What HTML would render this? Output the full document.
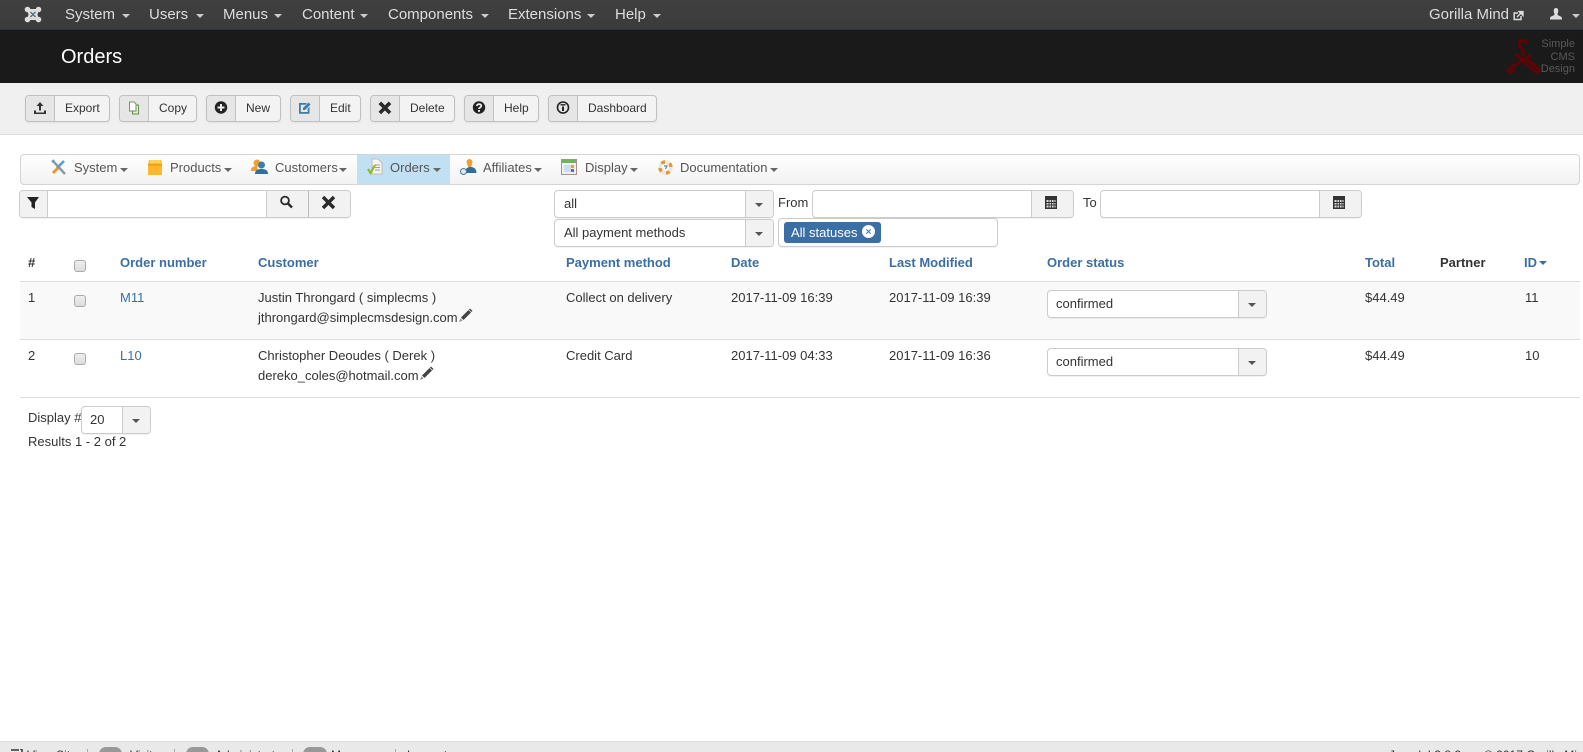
<!DOCTYPE html>
<html><head><meta charset="utf-8"><title>Orders</title>
<style>
*{box-sizing:border-box}
html,body{margin:0;padding:0;width:1583px;height:752px;overflow:hidden;background:#fff;font-family:"Liberation Sans",Arial,sans-serif;font-size:13px;color:#333}
#w{position:relative;width:1583px;height:752px;overflow:hidden}
.a,.t{position:absolute}
.t{white-space:nowrap;line-height:20px}
.nav{left:0;top:0;width:1583px;height:30px;background:linear-gradient(#404040,#3b3b3b);border-bottom:1px solid #2b3440}
.n{color:#ddd;font-size:15px;top:5px}
.c{position:absolute;width:0;height:0;border-left:4px solid transparent;border-right:4px solid transparent;border-top:4px solid #666}
.c.w{border-top:4px solid #ccc}
.head{left:0;top:30px;width:1583px;height:53px;background:#1a1a1a}
.tb{left:0;top:83px;width:1583px;height:52px;background:#f0f0f0;border-bottom:1px solid #ddd}
.btn{position:absolute;top:95px;height:27px;border:1px solid #c0c0c0;border-radius:4px;background:#f3f3f3;box-shadow:0 1px 2px rgba(0,0,0,.06);font-size:12px;line-height:25px;color:#333}
.btn i{position:absolute;left:0;top:0;bottom:0;width:29px;background:#e6e6e6;border-right:1px solid #c0c0c0;border-radius:3px 0 0 3px}
.btn svg{position:absolute;left:6px;top:4px}
.btn span{position:absolute;left:39px;top:0;white-space:nowrap}
.sub{left:20px;top:154px;width:1560px;height:31px;border:1px solid #d4d4d4;border-radius:4px;background:linear-gradient(#fff,#f2f2f2)}
.m{font-size:13px;top:158px;color:#555}
.box{position:absolute;height:28px;border:1px solid #ccc;background:#fff;border-radius:4px;box-shadow:0 1px 1px rgba(0,0,0,.06)}
.sel i{position:absolute;right:0;top:0;bottom:0;background:#f2f2f2;border-left:1px solid #ccc;border-radius:0 3px 3px 0}
.sel b{position:absolute;left:8px;top:3px;font-weight:normal;line-height:20px;white-space:nowrap}
.sel .c{top:12px;border-top-color:#555}
.th{font-weight:bold;color:#3a6ea5;top:253px}
.l{color:#3a6ea5}
.hr{left:20px;width:1560px;height:1px;background:#ddd}
.cb{position:absolute;left:74px;width:12px;height:12px;border:1px solid #aaa;border-radius:3px;background:linear-gradient(#eee,#ddd)}
.foot{left:0;top:741px;width:1583px;height:11px;background:#e9e9e9;border-top:1px solid #ddd}
.f{top:745px;font-size:12px;color:#333}
.sp{top:749px;width:1px;height:3px;background:#aaa}
.bd{top:747px;height:14px;background:#999;border-radius:8px}
</style></head><body><div id="w">

<div class="a nav"></div>
<svg class="a" style="left:24px;top:6px" width="18" height="17" viewBox="0 0 18 17"><g fill="#ddd"><circle cx="3.500" cy="3.500" r="2.800"/><circle cx="14.500" cy="3.500" r="2.800"/><circle cx="3.500" cy="13.500" r="2.800"/><circle cx="14.500" cy="13.500" r="2.800"/><path d="M3 3H15L13.500 8.500L15 14H3L4.500 8.500Z"/></g><path d="M6.500 6L9 8.500L11.500 6M6.500 11L9 8.500L11.500 11" fill="none" stroke="#5a6a80" stroke-width="1.300"/></svg>
<div class="t n" style="left:65px">System</div><div class="c w" style="left:122px;top:14px"></div>
<div class="t n" style="left:149px">Users</div><div class="c w" style="left:196px;top:14px"></div>
<div class="t n" style="left:223px">Menus</div><div class="c w" style="left:274px;top:14px"></div>
<div class="t n" style="left:302px">Content</div><div class="c w" style="left:360px;top:14px"></div>
<div class="t n" style="left:388px">Components</div><div class="c w" style="left:481px;top:14px"></div>
<div class="t n" style="left:508px">Extensions</div><div class="c w" style="left:587px;top:14px"></div>
<div class="t n" style="left:615px">Help</div><div class="c w" style="left:653px;top:14px"></div>
<div class="t n" style="left:1429px">Gorilla Mind</div>
<svg class="a" style="left:1513px;top:10px" width="11" height="11" viewBox="0 0 11 11"><path d="M8 6V9.500H1.200V3H5" fill="none" stroke="#ddd" stroke-width="1.500"/><path d="M4 7L8 3M6 1.500H10V5.500Z" stroke="#ddd" stroke-width="1.300" fill="#ddd"/></svg>
<svg class="a" style="left:1550px;top:8px" width="12" height="12" viewBox="0 0 12 12"><path d="M6 0C4.200 0 3.500 1.500 3.800 3.500C4 5 4.500 5.500 4.500 6.500C4 8 0 8.200 0 10V11.500H12V10C12 8.200 8 8 7.500 6.500C7.500 5.500 8 5 8.200 3.500C8.500 1.500 7.800 0 6 0Z" fill="#ddd"/></svg>
<div class="c w" style="left:1572px;top:14px"></div>

<div class="a head"></div>
<div class="t" style="left:61px;top:47px;font-size:20px;color:#fff">Orders</div>
<svg class="a" style="left:1505px;top:38px" width="36" height="36" viewBox="0 0 36 36"><g fill="none" stroke="#5c0505" stroke-width="3.200" stroke-linecap="round"><path d="M21.500 4.500C20 1.500 14 2 14 5.500C14 8.500 18 10 18 14V17"/><path d="M25 18L5 30C2.500 32 3.500 35 6 34L9 32"/><path d="M11.500 17L31 34C33.500 35 35 33 33.500 31L21 20"/></g></svg>
<div class="a" style="left:1535px;top:38px;width:40px;text-align:right;font-size:11px;line-height:12.500px;color:#595959">Simple<br>CMS<br>Design</div>

<div class="a tb"></div>
<div class="btn" style="left:25px;width:85px"><i></i><svg width="16" height="16" viewBox="0 0 16 16"><path d="M8 2L11.500 6H9V10.500H7V6H4.500ZM2 10.500H4V12.500H12V10.500H14V14H2Z" fill="#333"/></svg><span>Export</span></div>
<div class="btn" style="left:119px;width:78px"><i></i><svg width="16" height="16" viewBox="0 0 16 16"><path d="M3.500 2H8L10 4V11H3.500Z" fill="#fff" stroke="#6a9a5a"/><path d="M10 5H12.500V14H6.500V11" fill="none" stroke="#6a8f4a"/></svg><span>Copy</span></div>
<div class="btn" style="left:206px;width:75px"><i></i><svg width="16" height="16" viewBox="0 0 16 16"><circle cx="8" cy="7.500" r="6.200" fill="#222"/><path d="M8 4V11M4.500 7.500H11.500" stroke="#eee" stroke-width="2"/></svg><span>New</span></div>
<div class="btn" style="left:290px;width:71px"><i></i><svg width="16" height="16" viewBox="0 0 16 16"><path d="M2 3H10L8.500 4.800H3.800V12H10.700V8.500L12.500 6.700V13.800H2Z" fill="#3f7ba6"/><path d="M6 8L11.500 2.500L13.500 4.500L8 10H6Z" fill="#3f7ba6"/></svg><span>Edit</span></div>
<div class="btn" style="left:370px;width:85px"><i></i><svg width="16" height="16" viewBox="0 0 16 16"><path d="M2.800 2.800L13 13M13 2.800L2.800 13" stroke="#2a2a2a" stroke-width="3.600"/></svg><span>Delete</span></div>
<div class="btn" style="left:464px;width:75px"><i></i><svg width="16" height="16" viewBox="0 0 16 16"><circle cx="8" cy="7.500" r="6.200" fill="#222"/><path d="M5.800 6C6 3.500 10.300 3.500 10.300 6C10.300 7.500 8 7.500 8 9" fill="none" stroke="#eee" stroke-width="1.700"/><rect x="7" y="10" width="2" height="1.800" fill="#eee"/></svg><span>Help</span></div>
<div class="btn" style="left:548px;width:109px"><i></i><svg width="16" height="16" viewBox="0 0 16 16"><circle cx="8" cy="7.500" r="5.500" fill="none" stroke="#222" stroke-width="1.600"/><path d="M8 6.500V11" stroke="#222" stroke-width="2"/><path d="M5.500 4.800H10.500" stroke="#222" stroke-width="1.400"/></svg><span>Dashboard</span></div>

<div class="a sub"></div>
<div class="a" style="left:357px;top:155px;width:93px;height:29px;background:#c1e0f3"></div>
<svg class="a" style="left:50px;top:159px" width="18" height="18" viewBox="0 0 18 18"><path d="M3 2L15 15" stroke="#8a9aa5" stroke-width="2.400"/><path d="M14 2L7 9" stroke="#5b9ec4" stroke-width="2.600"/><path d="M8 9L3 14" stroke="#e8992e" stroke-width="3"/><path d="M2 3L4 1" stroke="#5b9ec4" stroke-width="2"/></svg>
<div class="t m" style="left:74px">System</div><div class="c" style="left:120px;top:168px"></div>
<svg class="a" style="left:147px;top:159px" width="16" height="17" viewBox="0 0 16 17"><path d="M2 1H14L15 5V16H1V5Z" fill="#fdb92e"/><path d="M1 5H15V7H1Z" fill="#f5a512"/><path d="M3 1H13L13.500 4H2.500Z" fill="#fcd262"/></svg>
<div class="t m" style="left:170px">Products</div><div class="c" style="left:224px;top:168px"></div>
<svg class="a" style="left:251px;top:158px" width="17" height="18" viewBox="0 0 17 18"><circle cx="6" cy="5" r="3.500" fill="#f0a030"/><path d="M0 12C0 9 3 8 6 8L7 13H0Z" fill="#f0a030"/><circle cx="10.500" cy="7" r="3.500" fill="#3d7da8"/><path d="M4 16C4 12 7 11 10.500 11C14 11 17 12 17 16Z" fill="#2f6f9c"/></svg>
<div class="t m" style="left:275px">Customers</div><div class="c" style="left:339px;top:168px"></div>
<svg class="a" style="left:367px;top:158px" width="16" height="18" viewBox="0 0 16 18"><path d="M5 1H11L15 5V16H5Z" fill="#f5f5ee" stroke="#b5b5a8" stroke-width=".8"/><path d="M8 7H13M8 9.500H13M8 12H13" stroke="#a0a098"/><path d="M1 11L3.500 15L8 7" fill="none" stroke="#8dbb2c" stroke-width="2.200"/></svg>
<div class="t m" style="left:390px">Orders</div><div class="c" style="left:433px;top:168px"></div>
<svg class="a" style="left:460px;top:158px" width="17" height="18" viewBox="0 0 17 18"><circle cx="9.500" cy="4" r="3" fill="#f0a030"/><path d="M7 6H12L11 9H8Z" fill="#f0a030"/><path d="M5 15C5 10 8 9 10.500 9C13 9 16.500 10 16.500 15Z" fill="#2f6f9c"/><circle cx="3.500" cy="13.500" r="3" fill="#dfe8ee" stroke="#4a7a9a"/></svg>
<div class="t m" style="left:483px">Affiliates</div><div class="c" style="left:534px;top:168px"></div>
<svg class="a" style="left:561px;top:159px" width="16" height="16" viewBox="0 0 16 16"><rect x=".5" y=".5" width="15" height="15" fill="#efeff0" stroke="#b08c8c"/><rect x="1" y="1" width="14" height="3" fill="#72b25a"/><rect x="3" y="6" width="7" height="7" fill="#cfdcec"/><rect x="10" y="6" width="3" height="3" fill="#e6a03a"/><rect x="10" y="10" width="3" height="3" fill="#3f77c0"/></svg>
<div class="t m" style="left:585px">Display</div><div class="c" style="left:630px;top:168px"></div>
<svg class="a" style="left:658px;top:160px" width="15" height="15" viewBox="0 0 15 15"><circle cx="7.500" cy="7.500" r="5.500" fill="none" stroke="#e8e8e8" stroke-width="3.400"/><path d="M3.500 3.500A5.500 5.500 0 0 1 7 2M11.500 3.500A5.500 5.500 0 0 1 13 7M11.500 11.500A5.500 5.500 0 0 1 8 13M3.500 11.500A5.500 5.500 0 0 1 2 8" fill="none" stroke="#e39a2d" stroke-width="3.400"/><path d="M6 6H9L7.500 9" fill="none" stroke="#5b86b5" stroke-width="1.200"/></svg>
<div class="t m" style="left:680px">Documentation</div><div class="c" style="left:770px;top:168px"></div>

<div class="box" style="left:19px;top:190px;width:332px;overflow:hidden"></div>
<div class="a" style="left:20px;top:191px;width:28px;height:26px;background:#f2f2f2;border-right:1px solid #ccc;border-radius:3px 0 0 3px"></div>
<svg class="a" style="left:25px;top:196px" width="16" height="14" viewBox="0 0 16 14"><path d="M2 1H14L10 6.500V13L6.500 11V6.500Z" fill="#222"/></svg>
<div class="a" style="left:266px;top:191px;width:84px;height:26px;background:#f2f2f2;border-left:1px solid #ccc;border-radius:0 3px 3px 0"></div>
<div class="a" style="left:308px;top:191px;width:1px;height:26px;background:#bbb"></div>
<svg class="a" style="left:279px;top:195px" width="15" height="15" viewBox="0 0 15 15"><circle cx="6" cy="5.500" r="3.900" fill="none" stroke="#2a2a2a" stroke-width="1.800"/><path d="M9 8.500L13 12.500" stroke="#2a2a2a" stroke-width="2.400"/></svg>
<svg class="a" style="left:321px;top:195px" width="15" height="15" viewBox="0 0 15 15"><path d="M2 2L13 13M13 2L2 13" stroke="#2a2a2a" stroke-width="3.400"/></svg>

<div class="box sel" style="left:554px;top:190px;width:220px"><b style="left:9px">all</b><i style="width:28px"></i><div class="c" style="left:200px"></div></div>
<div class="box sel" style="left:554px;top:219px;width:220px"><b style="left:9px">All payment methods</b><i style="width:28px"></i><div class="c" style="left:200px"></div></div>
<div class="t" style="left:778px;top:193px">From</div>
<div class="box sel" style="left:812px;top:190px;width:262px"><i style="width:42px"></i></div>
<svg class="a" style="left:1044px;top:195px" width="14" height="15" viewBox="0 0 14 15"><rect x="1" y="1" width="12" height="13" fill="#333"/><path d="M2.500 5H11.500V12.500H2.500Z" fill="#ddd"/><path d="M2.500 7.500H11.500M2.500 10H11.500M5 5V12.500M7.500 5V12.500M10 5V12.500" stroke="#333" stroke-width=".9"/></svg>
<div class="t" style="left:1083px;top:193px">To</div>
<div class="box sel" style="left:1100px;top:190px;width:262px"><i style="width:42px"></i></div>
<svg class="a" style="left:1332px;top:195px" width="14" height="15" viewBox="0 0 14 15"><rect x="1" y="1" width="12" height="13" fill="#333"/><path d="M2.500 5H11.500V12.500H2.500Z" fill="#ddd"/><path d="M2.500 7.500H11.500M2.500 10H11.500M5 5V12.500M7.500 5V12.500M10 5V12.500" stroke="#333" stroke-width=".9"/></svg>
<div class="box" style="left:778px;top:218px;width:220px;height:29px"></div>
<div class="a" style="left:784px;top:222px;width:97px;height:21px;background:#3a6ea5;border-radius:3px"></div>
<div class="t" style="left:791px;top:223px;color:#fff">All statuses</div>
<svg class="a" style="left:861px;top:224px" width="15" height="15" viewBox="0 0 15 15"><circle cx="7.500" cy="7.500" r="6.500" fill="#fff"/><path d="M5.300 5.300L9.700 9.700M9.700 5.300L5.300 9.700" stroke="#3a6ea5" stroke-width="1"/></svg>

<div class="t" style="left:28px;top:253px;font-weight:bold">#</div>
<div class="cb" style="top:260px"></div>
<div class="t th" style="left:120px">Order number</div>
<div class="t th" style="left:258px">Customer</div>
<div class="t th" style="left:566px">Payment method</div>
<div class="t th" style="left:731px">Date</div>
<div class="t th" style="left:889px">Last Modified</div>
<div class="t th" style="left:1047px">Order status</div>
<div class="t th" style="left:1365px">Total</div>
<div class="t" style="left:1440px;top:253px;font-weight:bold">Partner</div>
<div class="t th" style="left:1524px">ID</div>
<div class="c" style="left:1539px;top:261px;border-top-color:#3a6ea5"></div>

<div class="a hr" style="top:281px"></div>
<div class="a" style="left:20px;top:282px;width:1560px;height:57px;background:#f9f9f9"></div>
<div class="a hr" style="top:339px"></div>
<div class="a hr" style="top:397px"></div>

<div class="t" style="left:28px;top:288px">1</div>
<div class="cb" style="top:295px"></div>
<div class="t l" style="left:120px;top:288px">M11</div>
<div class="t" style="left:258px;top:288px">Justin Throngard ( simplecms )</div>
<div class="t" style="left:258px;top:308px">jthrongard@simplecmsdesign.com</div>
<svg class="a" style="left:458px;top:308px" width="15" height="15" viewBox="0 0 15 15"><path d="M3 9.500L10.500 2L13 4.500L5.500 12Z" fill="#444"/><path d="M11.500 1L14 3.500" stroke="#444" stroke-width="1.500"/><path d="M1 14L2.500 10.500L4.500 12.500Z" fill="#888"/></svg>
<div class="t" style="left:566px;top:288px">Collect on delivery</div>
<div class="t" style="left:731px;top:288px">2017-11-09 16:39</div>
<div class="t" style="left:889px;top:288px">2017-11-09 16:39</div>
<div class="box sel" style="left:1047px;top:290px;width:220px"><b>confirmed</b><i style="width:28px"></i><div class="c" style="left:200px"></div></div>
<div class="t" style="left:1365px;top:288px">$44.49</div>
<div class="t" style="left:1525px;top:288px">11</div>

<div class="t" style="left:28px;top:346px">2</div>
<div class="cb" style="top:353px"></div>
<div class="t l" style="left:120px;top:346px">L10</div>
<div class="t" style="left:258px;top:346px">Christopher Deoudes ( Derek )</div>
<div class="t" style="left:258px;top:366px">dereko_coles@hotmail.com</div>
<svg class="a" style="left:419px;top:366px" width="15" height="15" viewBox="0 0 15 15"><path d="M3 9.500L10.500 2L13 4.500L5.500 12Z" fill="#444"/><path d="M11.500 1L14 3.500" stroke="#444" stroke-width="1.500"/><path d="M1 14L2.500 10.500L4.500 12.500Z" fill="#888"/></svg>
<div class="t" style="left:566px;top:346px">Credit Card</div>
<div class="t" style="left:731px;top:346px">2017-11-09 04:33</div>
<div class="t" style="left:889px;top:346px">2017-11-09 16:36</div>
<div class="box sel" style="left:1047px;top:348px;width:220px"><b>confirmed</b><i style="width:28px"></i><div class="c" style="left:200px"></div></div>
<div class="t" style="left:1365px;top:346px">$44.49</div>
<div class="t" style="left:1525px;top:346px">10</div>

<div class="t" style="left:28px;top:408px">Display #</div>
<div class="box sel" style="left:81px;top:406px;width:70px"><b>20</b><i style="width:28px"></i><div class="c" style="left:50px"></div></div>
<div class="t" style="left:28px;top:432px">Results 1 - 2 of 2</div>

<div class="a foot"></div>
<svg class="a" style="left:11px;top:749px" width="12" height="3" viewBox="0 0 12 3"><path d="M0 1H8M9 0H11V3" stroke="#333" stroke-width="1.500" fill="none"/></svg>
<div class="t f" style="left:27px">View Site</div>
<div class="a sp" style="left:87px"></div>
<div class="a bd" style="left:99px;width:23px"></div>
<div class="t f" style="left:130px">Visitors</div>
<div class="a sp" style="left:174px"></div>
<div class="a bd" style="left:186px;width:23px"></div>
<div class="t f" style="left:215px">Administrator</div>
<div class="a sp" style="left:292px"></div>
<div class="a bd" style="left:303px;width:24px"></div>
<div class="t f" style="left:331px">Messages</div>
<div class="a sp" style="left:395px"></div>
<div class="t f" style="left:407px">Log out</div>
<div class="t f" style="left:1389px">Joomla! 3.8.2</div>
<div class="t f" style="left:1484px">© 2017 Gorilla Mind</div>
</div></body></html>
